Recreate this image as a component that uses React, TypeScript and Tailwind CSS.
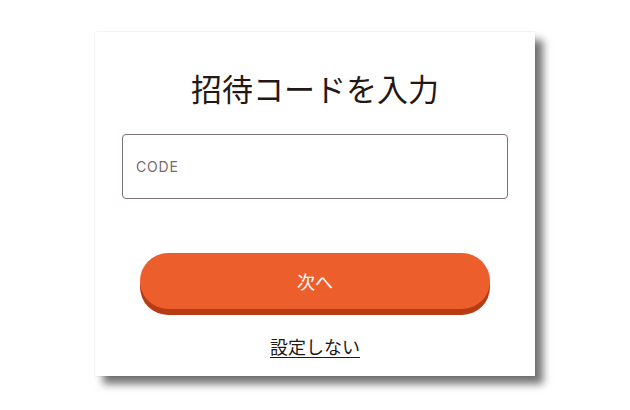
import React, { useState } from "react";

const font = "font-['Noto_Sans_CJK_JP','Noto_Sans',sans-serif]";

export default function App() {
  const [code, setCode] = useState("");

  return (
    <div className={`w-[630px] h-[410px] bg-white ${font} pt-[32px] pl-[95px]`}>
      <div className="w-[440px] h-[344px] bg-white shadow-[0_0_2px_rgba(0,0,0,0.12),8px_8px_8px_rgba(0,0,0,0.55)] flex flex-col items-center pt-[38px]">
        <h1 className="text-[31px] leading-[36px] font-normal text-[#231815]">
          招待コードを入力
        </h1>
        <input
          value={code}
          onChange={(e) => setCode(e.target.value)}
          placeholder="CODE"
          className="mt-[28px] w-[386px] h-[65px] border border-[#7d7171] rounded-[4px] px-[13px] text-[14px] tracking-[0.8px] text-[#231815] placeholder:text-[#7a6b6b] outline-none font-['Inter','Noto_Sans',sans-serif]"
        />
        <button
          type="button"
          className="mt-[54px] w-[350px] h-[56px] rounded-full bg-[#ec5e2c] shadow-[0_6px_0_#b73c13] text-white text-[18px] leading-[24px]"
        >
          次へ
        </button>
        <a
          href="#"
          className="mt-[25px] text-[18px] leading-[24px] text-[#231815] underline underline-offset-[3px] decoration-[1px]"
        >
          設定しない
        </a>
      </div>
    </div>
  );
}
